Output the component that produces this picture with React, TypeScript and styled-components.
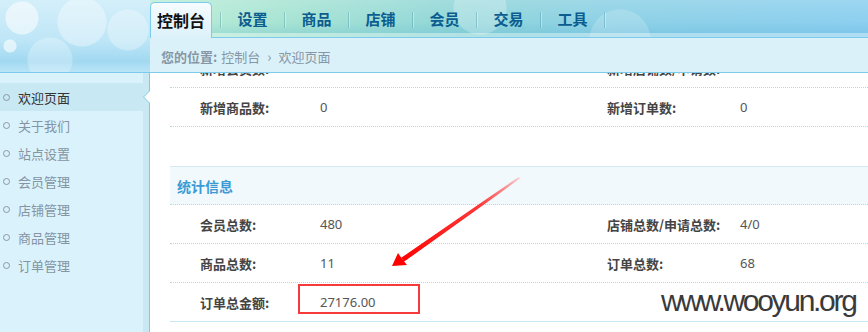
import React from "react";
import styled, { createGlobalStyle } from "styled-components";

const GlobalStyle = createGlobalStyle`
  html, body {
    margin: 0;
    padding: 0;
    background: #fff;
  }
  body {
    font-family: "Noto Sans", "Noto Sans CJK SC", sans-serif;
  }
`;

const CN = `"Noto Sans CJK SC", "Noto Sans", sans-serif`;

const Page = styled.div`
  position: relative;
  width: 868px;
  height: 332px;
  overflow: hidden;
  font-family: ${CN};
`;

// --- 头部 ---
const Header = styled.div`
  display: grid;
  grid-template-columns: 150px 1fr;
  height: 72px;
  border-bottom: 1px solid #7ccbea;
`;

const LogoArea = styled.div`
  background:
    radial-gradient(circle at 22px 18px, rgba(255, 255, 255, 0.55) 0 16px, transparent 17px),
    radial-gradient(circle at 82px 22px, rgba(255, 255, 255, 0.35) 0 24px, transparent 25px),
    radial-gradient(circle at 10px 46px, rgba(255, 255, 255, 0.6) 0 6px, transparent 7px),
    radial-gradient(circle at 128px 30px, rgba(255, 255, 255, 0.3) 0 20px, transparent 21px),
    radial-gradient(circle at 50px 60px, rgba(255, 255, 255, 0.25) 0 22px, transparent 23px),
    linear-gradient(#d4effa 0%, #bfe6f7 55%, #a2d9f1 85%, #b9e4f6 100%);
`;

const HeaderRight = styled.div`
  display: flex;
  flex-direction: column;
`;

const TabBar = styled.div`
  height: 38px;
  box-sizing: border-box;
  padding-top: 2px;
  display: flex;
  align-items: stretch;
  border-bottom: 1px solid #7ccbea;
  background:
    radial-gradient(circle at 330px 8px, rgba(255, 255, 255, 0.25) 0 26px, transparent 27px),
    radial-gradient(circle at 470px 40px, rgba(255, 255, 255, 0.18) 0 30px, transparent 31px),
    linear-gradient(rgba(255, 255, 255, 0.15), rgba(255, 255, 255, 0) 60%, rgba(30, 140, 200, 0.12) 88%, rgba(255, 255, 255, 0.3) 90%),
    linear-gradient(90deg, #bdeed7 0%, #a6e3d3 20%, #8fd5d9 45%, #8dd1e6 65%, #8ccfef 100%);
`;

const ActiveTab = styled.div`
  width: 62px;
  box-sizing: border-box;
  margin-bottom: -1px;
  border: 1px solid #7ccbea;
  border-bottom: none;
  border-radius: 5px 5px 0 0;
  background: linear-gradient(#f6fcfe, #dcf1fa);
  display: flex;
  align-items: center;
  justify-content: center;
  font-size: 16px;
  font-weight: bold;
  color: #111;
  padding-bottom: 2px;
  margin-right: 8px;
`;

const Sep = styled.span`
  width: 1px;
  margin: 10px 0 9px;
  background: rgba(70, 140, 160, 0.35);
  box-shadow: 1px 0 0 rgba(255, 255, 255, 0.35);
`;

const Tab = styled.div`
  width: 63px;
  display: flex;
  align-items: center;
  justify-content: center;
  font-size: 15px;
  font-weight: bold;
  color: #0b5c8f;
  padding-bottom: 2px;
`;

const Breadcrumb = styled.div`
  flex: 1;
  background: #dbf1fa;
  display: flex;
  align-items: center;
  padding-left: 11px;
  padding-top: 2px;
  font-size: 13px;
  color: #8796a4;
  gap: 4px;
`;

const CrumbLabel = styled.b`
  font-weight: bold;
`;

const Chevron = styled.span`
  margin: 0 3px;
  font-size: 14px;
`;

// --- 主体 ---
const Body = styled.div`
  display: grid;
  grid-template-columns: 150px 1fr;
  height: 259px;
`;

const Sidebar = styled.div`
  background: #daf2fc;
  border-right: 1px solid #7ccbea;
  box-shadow: inset -6px 0 0 #c8e8f3;
  padding-top: 10px;
`;

const NavItem = styled.div<{ $active?: boolean }>`
  position: relative;
  height: 28px;
  width: 143px;
  display: flex;
  align-items: center;
  gap: 8px;
  padding-left: 3px;
  box-sizing: border-box;
  font-size: 13px;
  color: ${(p) => (p.$active ? "#333" : "#8594a2")};
  background: ${(p) => (p.$active ? "#c8e8f3" : "transparent")};
`;

const Bullet = styled.span`
  width: 5px;
  height: 5px;
  border: 1.5px solid #8a98a3;
  border-radius: 50%;
`;

const Notch = styled.span`
  position: absolute;
  right: -7px;
  top: 7px;
  width: 0;
  height: 0;
  border-top: 7px solid transparent;
  border-bottom: 7px solid transparent;
  border-right: 7px solid #7ccbea;
  &::after {
    content: "";
    position: absolute;
    left: 1px;
    top: -6px;
    border-top: 6px solid transparent;
    border-bottom: 6px solid transparent;
    border-right: 6px solid #fff;
  }
`;

const Main = styled.div`
  background: #fff;
  overflow: hidden;
`;

const Scroller = styled.div`
  margin-top: -24px;
  padding-left: 20px;
`;

const Section = styled.div`
  margin-bottom: 39px;
`;

const SectionTitle = styled.div`
  height: 39px;
  box-sizing: border-box;
  border-top: 1px solid #d3eaf5;
  border-bottom: 1px dotted #b5d9e6;
  background: #f2f9fd;
  display: flex;
  align-items: center;
  padding-left: 7px;
  font-size: 14px;
  font-weight: bold;
  color: #3c9bd4;
`;

const Row = styled.div<{ $last?: boolean }>`
  height: 39px;
  box-sizing: border-box;
  border-bottom: ${(p) => (p.$last ? "1px solid #c7e7f3" : "1px dotted #b5d9e6")};
  display: grid;
  grid-template-columns: 120px 287px 133px 1fr;
  align-items: center;
  padding-left: 30px;
  font-size: 13px;
`;

const Label = styled.span`
  font-weight: bold;
  color: #444;
`;

const Value = styled.span`
  color: #555;
  font-family: "Noto Sans", "Noto Sans CJK SC", sans-serif;
`;

// --- 标注 ---
const Overlay = styled.svg`
  position: absolute;
  left: 0;
  top: 0;
  pointer-events: none;
`;

const MarkBox = styled.div`
  position: absolute;
  left: 298px;
  top: 284px;
  width: 122px;
  height: 30px;
  box-sizing: border-box;
  border: 2px solid #f43a3a;
`;

const Watermark = styled.div`
  position: absolute;
  left: 661px;
  top: 284px;
  font-family: "Liberation Sans", Arial, sans-serif;
  font-size: 30px;
  letter-spacing: -2.3px;
  color: #3a3a3a;
  line-height: 34px;
`;

type Stat = [string, string, string, string];

const todayRows: Stat[] = [
  ["新增会员数:", "10", "新增店铺数/申请数:", "0/0"],
  ["新增商品数:", "0", "新增订单数:", "0"],
];

const totalRows: Stat[] = [
  ["会员总数:", "480", "店铺总数/申请总数:", "4/0"],
  ["商品总数:", "11", "订单总数:", "68"],
  ["订单总金额:", "27176.00", "", ""],
];

const tabs = ["设置", "商品", "店铺", "会员", "交易", "工具"];
const menu = ["欢迎页面", "关于我们", "站点设置", "会员管理", "店铺管理", "商品管理", "订单管理"];

const StatRow: React.FC<{ row: Stat; last?: boolean }> = ({ row, last }) => (
  <Row $last={last}>
    <Label>{row[0]}</Label>
    <Value>{row[1]}</Value>
    <Label>{row[2]}</Label>
    <Value>{row[3]}</Value>
  </Row>
);

export default function App() {
  return (
    <Page>
      <GlobalStyle />
      <Header>
        <LogoArea />
        <HeaderRight>
          <TabBar>
            <ActiveTab>控制台</ActiveTab>
            <Sep />
            {tabs.map((t) => (
              <React.Fragment key={t}>
                <Tab>{t}</Tab>
                <Sep />
              </React.Fragment>
            ))}
          </TabBar>
          <Breadcrumb>
            <CrumbLabel>您的位置:</CrumbLabel>
            <span>控制台</span>
            <Chevron>›</Chevron>
            <span>欢迎页面</span>
          </Breadcrumb>
        </HeaderRight>
      </Header>
      <Body>
        <Sidebar>
          {menu.map((m, i) => (
            <NavItem key={m} $active={i === 0}>
              <Bullet />
              {m}
              {i === 0 && <Notch />}
            </NavItem>
          ))}
        </Sidebar>
        <Main>
          <Scroller>
            <Section>
              {todayRows.map((r) => (
                <StatRow key={r[0]} row={r} />
              ))}
            </Section>
            <Section>
              <SectionTitle>统计信息</SectionTitle>
              {totalRows.map((r, i) => (
                <StatRow key={r[0]} row={r} last={i === totalRows.length - 1} />
              ))}
            </Section>
          </Scroller>
        </Main>
      </Body>

      <Overlay width={868} height={332} viewBox="0 0 868 332">
        <defs>
          <linearGradient id="arrowFade" x1="520" y1="178" x2="400" y2="261" gradientUnits="userSpaceOnUse">
            <stop offset="0" stopColor="#ff3030" stopOpacity="0.1" />
            <stop offset="0.35" stopColor="#ff2020" stopOpacity="0.85" />
            <stop offset="1" stopColor="#ff0000" />
          </linearGradient>
        </defs>
        <path d="M520 178 L518.5 177.6 L402 258 L404 261 Z" fill="url(#arrowFade)" stroke="url(#arrowFade)" strokeWidth="1.2" />
        <path d="M392 266 L398 253 L402.5 259.5 L407 265 Z" fill="#ff0000" />
      </Overlay>
      <MarkBox />
      <Watermark>www.wooyun.org</Watermark>
    </Page>
  );
}
